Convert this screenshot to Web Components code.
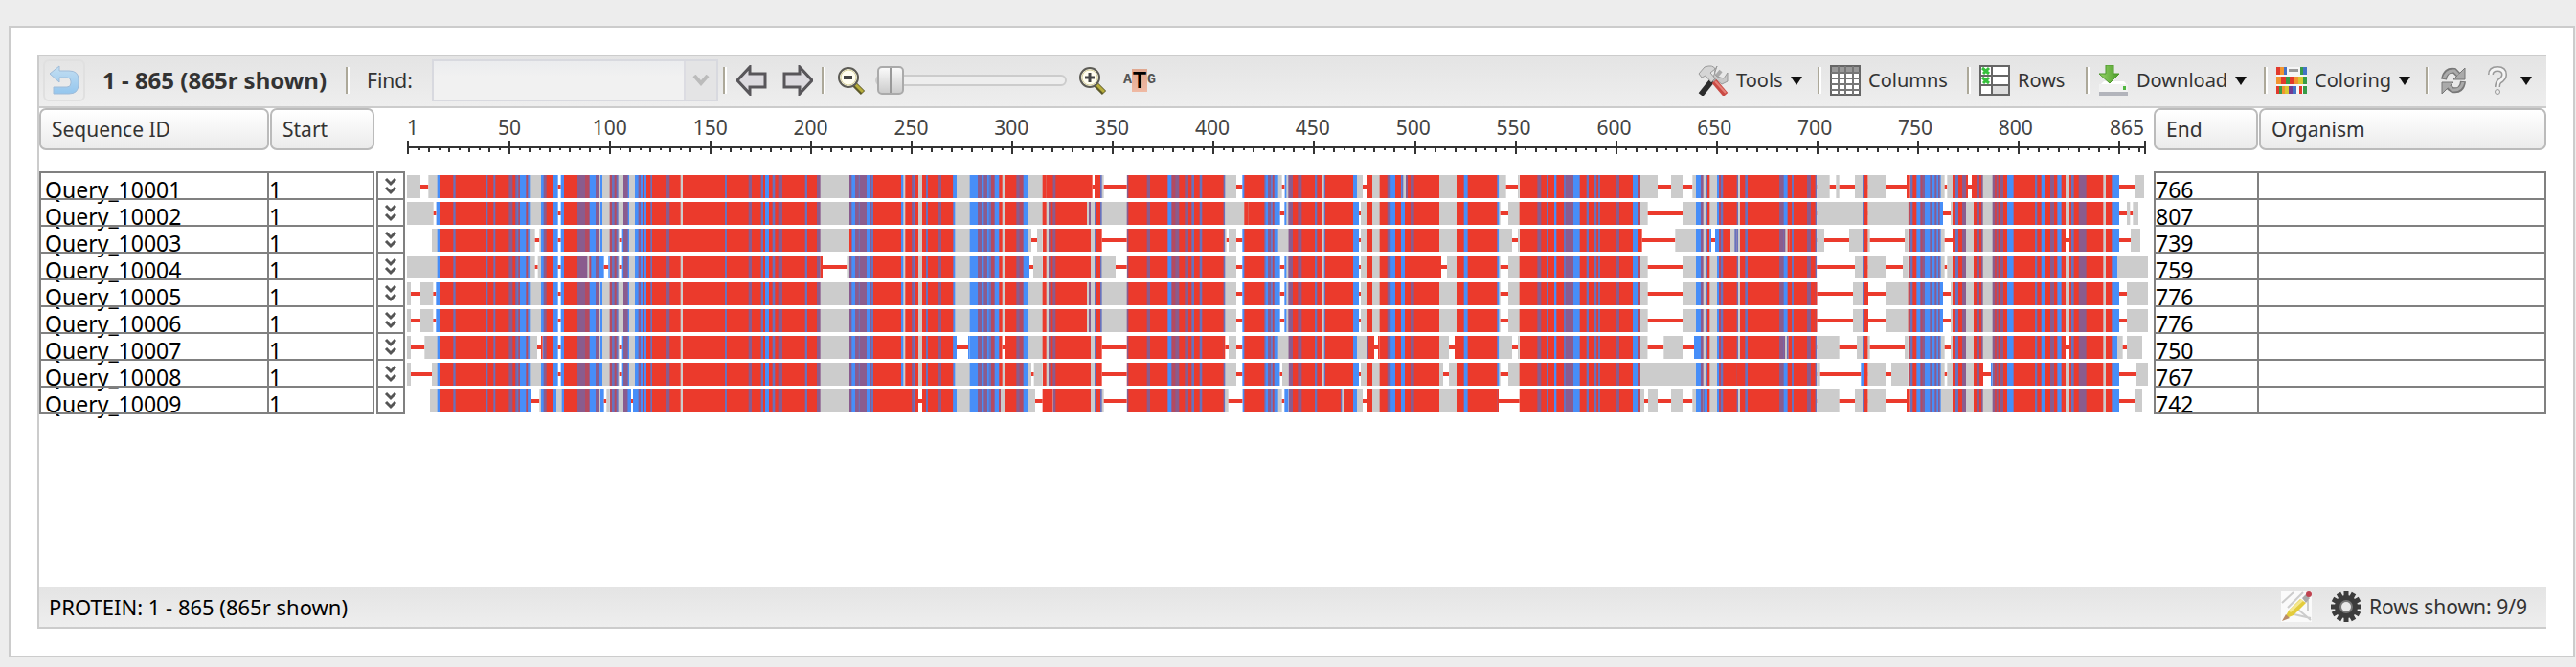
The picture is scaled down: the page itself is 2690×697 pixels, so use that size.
<!DOCTYPE html>
<html lang="en">
<head>
<meta charset="utf-8">
<title>Multiple Sequence Alignment Viewer</title>
<style>
html { background: #ededed; }
body { margin: 27px 1px 10px 9px; font: 21px/30px "Noto Sans", "Open Sans", sans-serif; color: #333; }
</style>
</head>
<body>
<msa-viewer></msa-viewer>
<script>
const ICONS = {
  back: '<defs><linearGradient id="g" x2="0" y2="1"><stop stop-color="#c4dff2"/><stop offset="1" stop-color="#94c6ee"/></linearGradient></defs><path d="M1 9 11 1V6H21Q31 6 31 15V20Q31 30 21 30H5V23H19Q23 23 23 19V17Q23 13 19 13H11V18Z" fill="url(#g)" stroke="#9fbcd9"/>',
  left: '<path d="M1 16 14 2V9H30V23H14V30Z" fill="#dcdadf" stroke="#58565a" stroke-width="3"/>',
  right: '<path d="M31 16 18 2V9H2V23H18V30Z" fill="#dcdadf" stroke="#58565a" stroke-width="3"/>',
  zoomout: '<path d="m18 20 9 9" stroke="#5d5a2a" stroke-width="6"/><path d="m19 20 8 8" stroke="#b7ad3b" stroke-width="3"/><circle cx="12" cy="13" r="10" fill="#fffdf0" stroke="#5c5b55" stroke-width="2"/><circle cx="12" cy="13" r="8" fill="none" stroke="#d8d29c"/><path d="M7 13H16" stroke="#444" stroke-width="4"/>',
  zoomin: '<path d="m18 20 9 9" stroke="#5d5a2a" stroke-width="6"/><path d="m19 20 8 8" stroke="#b7ad3b" stroke-width="3"/><circle cx="12" cy="13" r="10" fill="#fffdf0" stroke="#5c5b55" stroke-width="2"/><circle cx="12" cy="13" r="8" fill="none" stroke="#d8d29c"/><path d="M7 13H17M12 8V18" stroke="#444" stroke-width="3"/>',
  tools: '<path d="m3 31 12-15" stroke="#2c2c2c" stroke-width="6"/><path d="m15 17 9-11" stroke="#aaa" stroke-width="4"/><path d="M20 1Q15 8 20 12L27 14 31 8V17L25 20 16 13Z" fill="#c8c8c8" stroke="#999"/><path d="M1 9 7 2Q16-1 18 4L13 8 18 14 14 18 8 11 4 13Z" fill="#d5d5d5" stroke="#999"/><path d="m17 17 12 14" stroke="#c94a44" stroke-width="6"/><path d="m18 17 11 12" stroke="#e58078" stroke-width="2"/>',
  columns: '<path fill="#fff" stroke="#666" stroke-width="2" d="M1 1H31V31H1Z"/><path fill="#999" d="M2 2H30V8H2Z"/><path d="M1 8H31M1 14H31M1 20H31M1 26H31M9 1V31M16 1V31M24 1V31" stroke="#777" stroke-width="2"/>',
  rows: '<path fill="#fff" stroke="#666" stroke-width="2" d="M1 1H31V31H1Z"/><path fill="#ddd" d="M14 22H30V30H14Z"/><path d="M1 11H31M1 21H31M13 1V31" stroke="#666" stroke-width="2"/><path d="m3 3 7 6M10 3 4 9M3 13l7 6M10 13l-6 6" stroke="#35c03b" stroke-width="3"/>',
  download: '<defs><linearGradient id="g"><stop stop-color="#9bd56a"/><stop offset="1" stop-color="#479a27"/></linearGradient></defs><path d="M6 17H27L31 22H1Z" fill="#fff"/><path d="M1 21H31V32H1Z" fill="#b2b4bb"/><path d="M1 20H31V28H1Z" fill="#f2f2f2"/><path d="M26 22h3v4h-3z" fill="#50b640"/><path d="M8 0H16V9H22L12 19 1 9H8Z" fill="url(#g)" stroke="#4d982d"/>',
  coloring: '<g><path fill="#f6f6f6" d="M0 2H32V30H0Z"/><path fill="#e23a2c" d="M0 2h4v8H0zM5 12h5v8H5zM14 12h4v8h-4zM0 22h3v8H0zM24 22h3v8h-3z"/><path fill="#f19530" d="M4 2h4v8H4zM0 12h5v8H0zM18 12h5v8h-5zM6 22h3v8H6z"/><path fill="#4472c4" d="M8 2h3v8H8zM28 2h4v8h-4zM17 22h4v8h-4z"/><path fill="#379c47" d="M25 2h3v8h-3zM10 12h4v8h-4zM28 12h4v8h-4zM3 22h3v8H3zM28 22h4v8h-4z"/><path fill="#d8ca30" d="M23 12h5v8h-5zM9 22h4v8H9z"/><path fill="#713b94" d="M13 22h4v8h-4z"/><path fill="#999" d="M13 4h10v3H13z"/></g>',
  refresh: '<path d="M6 15Q8 4 17 6L21 10M26 17Q25 28 15 26L11 23" fill="none" stroke="#777" stroke-width="6"/><path d="M28 3V15H16ZM4 30V18H16Z" fill="#aaa" stroke="#777"/><path d="M6 14Q9 5 17 6L21 10M26 18Q24 27 15 26L11 22" fill="none" stroke="#aaa" stroke-width="3"/>',
  help: '<path d="M9 10Q9 4 16 4T23 10Q23 14 18 17 16 19 16 23" fill="none" stroke="#999" stroke-width="6"/><path d="M9 10Q9 4 16 4T23 10Q23 14 18 17 16 19 16 23" fill="none" stroke="#f4f4f4" stroke-width="3"/><circle cx="16" cy="28" r="2.500" fill="#eee" stroke="#999"/>',
  pencil: '<path fill="#fafafa" d="M0 0H32V32H0Z"/><path d="M1 12 13 1M7 17 23 1M9 23l22 5M18 19l13 11M28 9V20" stroke="#ccc" stroke-width="2"/><path d="M3 29 8 20 20 8 26 12 13 25Z" fill="#e3cc3c"/><path d="M9 21 22 9" stroke="#f5e892" stroke-width="3"/><path d="m22 7 4-4 4 4-4 5Z" fill="#aaa"/><circle cx="29" cy="3" r="3" fill="#bf4350"/><path d="m1 31 4-7 4 4Z" fill="#b98b68"/>',
  gear: '<g stroke="#3c3c3c" stroke-width="5"><path d="M16 0V32M0 16H32M8 2 24 30M24 2 8 30M2 8 30 24M2 24 30 8"/></g><circle cx="16" cy="16" r="12" fill="#3c3c3c"/><circle cx="16" cy="16" r="7" fill="#777"/><circle cx="16" cy="16" r="5" fill="#e9e9e9"/>',
  expand: '<path d="M5 3 10 8 15 3M5 12 10 17 15 12" fill="none" stroke="#555" stroke-width="3"/>',
};

const COLORS = { R: '#eb3a2c', B: '#478ef8', G: '#cccccc', p: '#8a5c8e', b: '#6872bd', m: '#b54a60', _: '#ffffff' };

/* Left edge of each quarter of the alignment, in thirds of a pixel at full width. */
const ORIGIN = [-15, 1425, 2865, 4245];
const SPAN = 5454;

/* Conservation colouring that the rows share: start, colour, next start ... */
const SHARED = [
  '15G27-57G97-106B117R160b167R262b268R286b292R334p346R354p358b364m369B388m394B400G435B443p452R471B488-497B507R549p573m587B606p615G621B627G650m657b665m671b677G693p707B711G729B740p747B753m759B765R778b783R825p838R872G879R1011b1017R1085p1095R1124b1131R1137B1149R1160b1168R1178p1191R1262b1269R1299p1310G1401p1408B1419p1430b1434p1440',
  '0p15B24p30b36R123B130G136R156p161b167R177G189R201b207R237p249R286B292G338B363p375B382p393B398b405m416B430R440G447R484p494m506B519G566R578G585p590R598p607R705G711p717G729b735R747b752G830p835R893p903R958B970m982p994R1012p1023R1033b1041R1058b1066R1133b1138G1173-1192B1198R1261b1265B1272p1282B1286m1292B1310-1324B1330G1336p1350R1366p1378R1419b1426R1440',
  '0R3G8b12R99B117-123G141R159G182R206p212b217B231R249B261R279p290R369G423R446B458R550B556G560-585G620R676p688R705b711R729B736R759b765p789B809R830b837R855b862R867b873R922p933R975B992m999G1022-1131G1173B1188p1196G1204b1209R1216G1239B1245m1251b1258R1301b1305G1311R1327b1335R1434p1440',
  '0R54p68B80R93b99R141p153R167b172-285G315b320R332-387G458R464b472R484B496m502p510B526p534B541p547B552p557B567-591G597R603b615R627p639G663R672p681R687p692G722p730R734p740R745p756R768B788R855b862R875B886R903p915R925B938R951G963R969b977R992p1016R1069G1077R1096B1119-1143G1209',
];

/* Where one row departs from the shared colouring. */
const ROWS = [
  ['Query_10001', 766, ['15G57-82G110B117', '286B297 578R598 705R722-729R747b752G758-830 1304G1316-1324', '111G129-141 251b256G264p270 556G578-615G620 999G1053-1095G1131-1162G1173', '172G212-232G242-291G315 332G387-453R464 560G572-580G597 639R645-657R663 1119-1167G1197_1209']],
  ['Query_10002', 807, ['15G98-106', '1138G1198R1210', '', '172G315 332G458 1119-1143G1153-1162G1179_1209']],
  ['Query_10003', 739, ['15_93G110B117 400G416-430G435 680-689B693 838R1011 1401R1408', '519G531-549G566 705R717 735R752-830 1138G1142-1149G1173 1304G1336', '556G597-615G620 992R1004-1108G1173 1216B1221-1233B1239 1281G1294b1301', '68p73G80R86 172G195-273G315 332G338-447G458 560G572-597 951-963 1119-1155G1185_1209']],
  ['Query_10004', 759, ['15G110B117 400G416-425G435 573p580G586m592B606 615B632-646B650 680-689B693 1310R1317-1396G1401', '519B525-537G566 705R717 752G795-830', '279R375-393G423', '172-291G315 332G387-441G458 560G572-580G597 1113G1209']],
  ['Query_10005', 776, ['', '', '', '167R172 320R333']],
  ['Query_10006', 776, ['', '', '', '167R172 320R333']],
  ['Query_10007', 750, ['15G27-70G110B117 400G423-435R440 680-689B693', '286B297-333B338 440-447 705R717 735R752-830 1133R1138-1149G1173 1304G1336', '111G141p147R165-177R182 369G399-417R423 556G597-615G620 1022-1072G1131-1167B1173', '68p72G78b82 172G242-297G315 332G338-447G458 560G572-591 951-963 1113G1130-1143G1191_1209']],
  ['Query_10008', 767, ['27-93G110B117 615B627 680-689B693', '519G531-539G566 705R717 735R752-830 1310-1317G1336', '369G381-399G423 999G1173 1301R1311', '172G182-310B320 332G387-405G458 560G572-580G597 681R693-717B722 1119-1173G1209']],
  ['Query_10009', 742, ['15_87G110B117 394B404-430G435 477B483G500B507 627B632-640G650 707B717-723B729', '123R156 177-189 286B297 430m435G447 519G543-566R598 705R717 747b752G758-830 1138G1148-1192 1304G1316-1324B1336', '0R60b64G69R99 111G129-141 550R555-620 999G1011-1023G1053-1095G1131-1162G1173 1196b1200B1209', '172G242-291G315 332G387-453R464 560G597 1119-1167G1191_1209']],
];

function paintRun(run, origin) {
  const starts = run.match(/\d+/g).map(n => Number(n) + origin);
  const codes = run.match(/[^\d]/g);
  const end = starts[starts.length - 1];
  return codes.map((c, i) => {
    const x = starts[i];
    if (c !== '-') return `<rect x="${x}" width="${end - x}" height="24" fill="${COLORS[c]}"/>`;
    return `<rect x="${x}" width="${end - x}" height="24" fill="#fff"/><rect x="${x}" y="10" width="${starts[i + 1] - x}" height="4" fill="${COLORS.R}"/>`;
  }).join('');
}

function define(name, html) {
  const t = document.createElement('template');
  t.innerHTML = html;
  customElements.define(name, class extends HTMLElement {
    constructor() {
      super();
      this.attachShadow({ mode: 'open' }).append(t.content.cloneNode(true));
    }
  });
}

class MsaIcon extends HTMLElement {
  connectedCallback() {
    const root = this.shadowRoot || this.attachShadow({ mode: 'open' });
    const name = this.getAttribute('name');
    root.innerHTML = `<style>:host{display:block;flex:none;width:32px;height:32px}:host([name=expand]){width:20px;height:20px}svg{display:block;width:100%;height:100%}</style>
      <svg viewBox="0 0 ${name === 'expand' ? '20 20' : '32 32'}" aria-hidden="true">${ICONS[name]}</svg>`;
  }
}
customElements.define('msa-icon', MsaIcon);

class MsaTrack extends HTMLElement {
  connectedCallback() {
    const edits = ROWS[Number(this.getAttribute('row'))][2];
    let art = '';
    SHARED.forEach((run, i) => { art += paintRun(run, ORIGIN[i]); });
    edits.forEach((list, i) => list.split(' ').filter(Boolean).forEach(run => { art += paintRun(run, ORIGIN[i]); }));
    this.attachShadow({ mode: 'open' }).innerHTML = `<style>:host{display:block;height:24px}svg{display:block;width:100%;height:24px}</style>
      <svg viewBox="0 0 ${SPAN} 24" preserveAspectRatio="none" aria-hidden="true">${art}</svg>`;
  }
}
customElements.define('msa-track', MsaTrack);

class MsaRuler extends HTMLElement {
  connectedCallback() {
    let ticks = '';
    for (let n = 5; n <= 860; n += 5) {
      const x = Math.round(2 + n * 2.101);
      const [y, h] = n % 50 === 0 ? [12, 14] : n % 10 === 0 ? [18, 6] : [18, 4];
      ticks += `<rect x="${x - 1}" y="${y}" width="2" height="${h}"/>`;
    }
    let labels = '<span class="first">1</span>';
    for (let n = 50; n <= 800; n += 50) labels += `<span>${n}</span>`;
    labels += '<span class="last">865</span>';
    this.attachShadow({ mode: 'open' }).innerHTML = `<style>
      :host{display:block;padding-top:5px;color:#444}
      div{display:flex;line-height:30px;height:17px}
      span{flex:50 1 0;text-align:center}
      .first{flex-grow:26;text-align:left}
      .last{flex-grow:39;text-align:right;box-sizing:border-box;padding-right:4px}
      svg{display:block;width:100%;height:30px}
      </style><div>${labels}</div>
      <svg viewBox="0 0 1818 30" preserveAspectRatio="none" fill="#333" aria-hidden="true"><rect x="1" y="18" width="1815" height="2"/><rect y="12" width="2" height="14"/><rect x="1814" y="12" width="2" height="14"/>${ticks}</svg>`;
  }
}
customElements.define('msa-ruler', MsaRuler);

define('tool-separator', `<style>:host{display:block;flex:none;width:2px;height:28px;background:#aca899;background-clip:padding-box;border-right:2px solid #fff}</style>`);

define('tool-button', `<style>
  :host{display:block;flex:none;font-size:20px}
  button{display:flex;align-items:center;gap:8px;width:100%;padding:0;border:0;background:none;font:inherit;color:inherit;white-space:nowrap}
  .caret{display:none;width:0;height:0;border:6px solid transparent;border-top:9px solid #111;border-bottom:0}
  :host([menu]) .caret{display:block}
</style><button type="button"><slot name="icon"></slot><slot></slot><span class="caret"></span></button>`);

define('column-header', `<style>
  :host{display:block}
  button{box-sizing:border-box;display:block;width:100%;height:44px;padding:0 0 0 11px;border:2px solid #bbb;border-radius:7px;background:linear-gradient(#fff,#ebebeb);font:inherit;color:inherit;text-align:left}
</style><button type="button"><slot></slot></button>`);

define('search-box', `<style>
  :host{display:flex;box-sizing:border-box;width:299px;height:44px;border:2px solid #d8d9df;background:linear-gradient(#ebecee,#f1f1f1 40%)}
  input{flex:1;min-width:0;border:0;padding:0 8px;background:none;font:inherit}
  button{width:34px;padding:0;border:0;border-left:2px solid #dcdce2;background:#e4e4e5}
  svg{display:block;margin:auto}
</style><input type="text" aria-label="Find"><button type="button" aria-label="Show recent searches"><svg width="18" height="12"><path d="M2 1 9 9 16 1" fill="none" stroke="#bbb" stroke-width="4"/></svg></button>`);

define('zoom-slider', `<style>
  :host{display:block;width:200px}
  input{appearance:none;display:block;width:100%;height:30px;margin:0;background:none}
  input::-webkit-slider-runnable-track{box-sizing:border-box;height:12px;border:2px solid #ccc;border-radius:6px;background:#eee}
  input::-webkit-slider-thumb{appearance:none;box-sizing:border-box;width:28px;height:30px;margin-top:-11px;border:2px solid #aaa;border-radius:5px;background:linear-gradient(90deg,transparent 11px,#999 11px,#999 13px,transparent 13px),linear-gradient(#fafafa,#ccc)}
</style><input type="range" min="0" max="100" value="0" aria-label="Zoom">`);

define('letters-icon', `<style>
  :host{display:flex;align-items:center;justify-content:center;width:32px;height:26px;font:bold 15px/24px "Liberation Mono",monospace;color:#555}
  b{background:linear-gradient(#e0a78f,#efb9a3);color:#000;font:bold 23px/24px "Liberation Sans",sans-serif;padding:0 1px}
</style>A<b>T</b>G`);

define('viewer-toolbar', `<style>
  :host{display:flex;align-items:center;box-sizing:border-box;height:54px;padding:0 15px 2px 4px;border-bottom:2px solid #ccc;background:linear-gradient(#e4e4e4,#eee);background-clip:padding-box}
  .undo{box-sizing:border-box;width:44px;height:44px;padding:4px;border:2px solid #e0e0e0;border-radius:6px;background:none}
  strong{width:236px;margin:0 18px;font-size:24px;white-space:nowrap}
  label{width:68px;margin-left:18px}
  .space{flex:1}
  .group{display:flex;align-items:center}
  .group tool-separator{margin-right:9px}
  .zoom{gap:12px}
</style>
<button class="undo" type="button" aria-label="Back"><msa-icon name="back"></msa-icon></button>
<strong>1 - 865 (865r shown)</strong>
<tool-separator></tool-separator>
<label>Find:</label><search-box></search-box>
<div class="group" style="gap:16px;margin-left:5px"><tool-separator style="margin-right:-6px"></tool-separator>
<tool-button><msa-icon slot="icon" name="left"></msa-icon></tool-button>
<tool-button><msa-icon slot="icon" name="right"></msa-icon></tool-button></div>
<div class="group zoom" style="margin-left:9px"><tool-separator style="margin-right:0"></tool-separator>
<tool-button style="width:28px"><msa-icon slot="icon" name="zoomout"></msa-icon></tool-button>
<zoom-slider></zoom-slider>
<tool-button style="width:32px"><msa-icon slot="icon" name="zoomin"></msa-icon></tool-button></div>
<tool-button style="margin-left:16px"><letters-icon></letters-icon></tool-button>
<div class="space"></div>
<div class="group"><tool-button menu style="width:125px"><msa-icon slot="icon" name="tools"></msa-icon>Tools</tool-button></div>
<div class="group"><tool-separator></tool-separator><tool-button style="width:143px"><msa-icon slot="icon" name="columns"></msa-icon>Columns</tool-button></div>
<div class="group"><tool-separator></tool-separator><tool-button style="width:111px"><msa-icon slot="icon" name="rows"></msa-icon>Rows</tool-button></div>
<div class="group"><tool-separator></tool-separator><tool-button menu style="width:173px"><msa-icon slot="icon" name="download"></msa-icon>Download</tool-button></div>
<div class="group"><tool-separator></tool-separator><tool-button menu style="width:156px"><msa-icon slot="icon" name="coloring"></msa-icon>Coloring</tool-button></div>
<div class="group"><tool-separator></tool-separator><tool-button style="width:46px"><msa-icon slot="icon" name="refresh"></msa-icon></tool-button>
<tool-button menu><msa-icon slot="icon" name="help"></msa-icon></tool-button></div>`);

const cellStyle = `
  table{width:100%;border-collapse:collapse;table-layout:fixed;color:#000;font-size:23px}
  td{box-sizing:border-box;height:28px;padding:0;border:2px solid #808080}
  td span{display:block;position:relative;z-index:-1;height:26px;line-height:34px;white-space:nowrap}`;

class MsaGrid extends HTMLElement {
  connectedCallback() {
    this.attachShadow({ mode: 'open' }).innerHTML = `<style>
      :host{display:grid;grid-template-columns:350px 30px minmax(0,1fr) 410px;column-gap:2px;padding-bottom:180px}
      .head{display:grid;gap:1px;height:66px;align-items:start}
      .names{grid-template-columns:240px 109px}
      .facts{grid-template-columns:109px 300px}
      .scale{grid-column:2/4;padding-left:32px;padding-right:4px}
      .pane{isolation:isolate}
      .tracks{display:grid;gap:4px;padding:4px 4px 0 0;align-content:start}
      ${cellStyle}
      .ids td:first-child{width:238px}
      .ids td:first-child span{padding-left:4px}
      .ends td:first-child{width:108px}
      .open button{display:flex;justify-content:center;align-items:center;width:100%;height:26px;padding:0;border:0;background:none}
      </style>
      <div class="head names"><column-header>Sequence ID</column-header><column-header>Start</column-header></div>
      <div class="scale"><msa-ruler></msa-ruler></div>
      <div class="head facts"><column-header>End</column-header><column-header>Organism</column-header></div>
      <div class="pane ids"><table aria-label="Sequences">${ROWS.map(r => `<tr><td><span>${r[0]}</span></td><td><span>1</span></td></tr>`).join('')}</table></div>
      <div class="pane open"><table aria-label="Expand rows">${ROWS.map(r => `<tr><td><button type="button" aria-label="Expand ${r[0]}"><msa-icon name="expand"></msa-icon></button></td></tr>`).join('')}</table></div>
      <div class="tracks">${ROWS.map((r, i) => `<msa-track row="${i}"></msa-track>`).join('')}</div>
      <div class="pane ends"><table aria-label="Sequence ends">${ROWS.map(r => `<tr><td><span>${r[1]}</span></td><td></td></tr>`).join('')}</table></div>`;
  }
}
customElements.define('msa-grid', MsaGrid);

define('viewer-status', `<style>
  :host{display:flex;align-items:center;box-sizing:border-box;height:42px;padding:0 20px 0 10px;background:linear-gradient(#e4e4e4,#eee)}
  .range{flex:1;color:#000;font-size:22px}
  button{padding:0;border:0;background:none;margin-right:20px}
  .settings{margin-right:8px}
</style><span class="range">PROTEIN: 1 - 865 (865r shown)</span>
<button type="button" aria-label="Feedback"><msa-icon name="pencil"></msa-icon></button>
<button class="settings" type="button" aria-label="Settings"><msa-icon name="gear"></msa-icon></button><span>Rows shown: 9/9</span>`);

define('msa-viewer', `<style>
  :host{display:block;border:2px solid #ccc;background:#fff;padding:28px}
  section{border:2px solid #ccc;border-right:0}
</style><section><viewer-toolbar></viewer-toolbar><msa-grid></msa-grid><viewer-status></viewer-status></section>`);
</script>
</body>
</html>
